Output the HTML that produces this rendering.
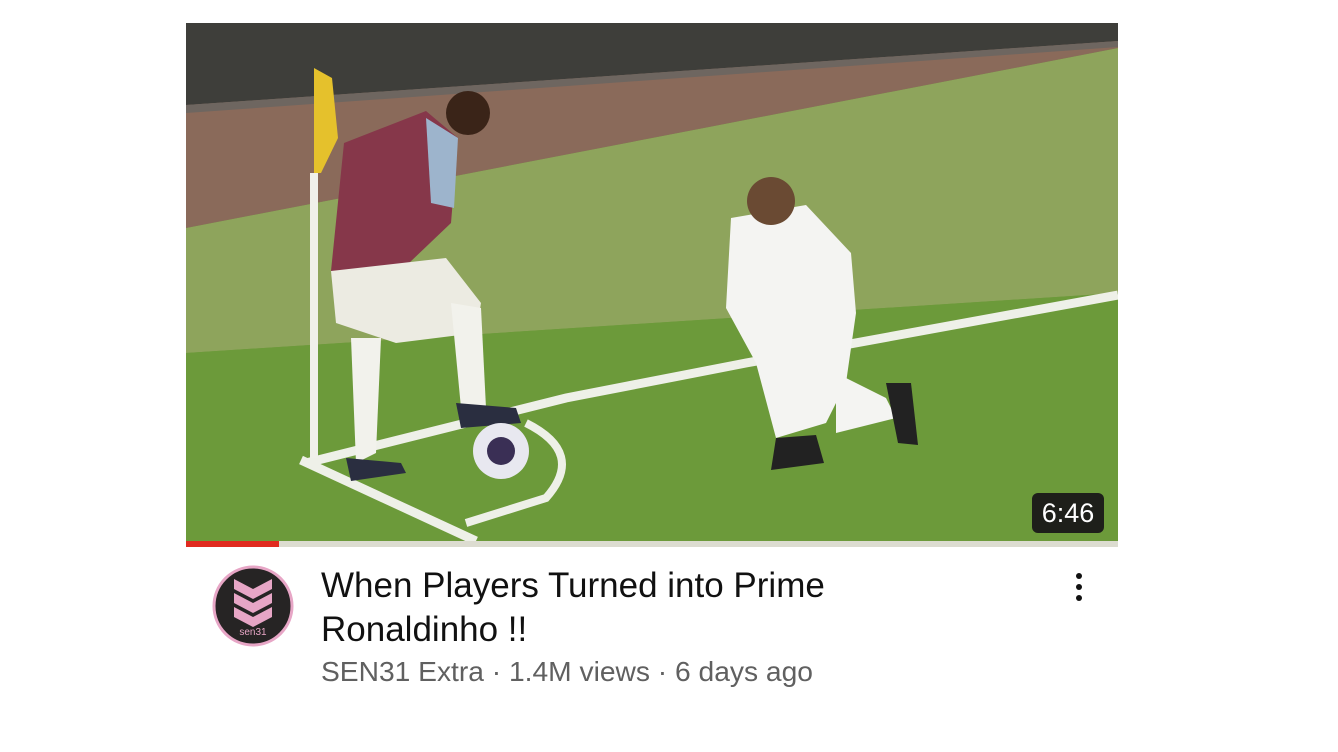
<!DOCTYPE html>
<html><head><meta charset="utf-8"><style>
body{margin:0;width:1338px;height:752px;background:#fff;overflow:hidden;font-family:"Liberation Sans",sans-serif;position:relative}
.thumb{position:absolute;left:186px;top:23px;width:932px;height:518px;overflow:hidden}
.bar{position:absolute;left:186px;top:541px;width:932px;height:6px;background:#dcdcd0}
.bar i{position:absolute;left:0;top:0;width:93px;height:6px;background:#e02a1f}
.dur{position:absolute;left:1032px;top:493px;width:72px;height:40px;background:#1e1f1a;border-radius:6px;color:#fff;font-size:27px;line-height:40px;text-align:center}
.t{position:absolute;left:321px;color:#111;font-size:35px;white-space:nowrap}
.m{position:absolute;left:321px;top:655px;color:#606060;font-size:28.2px;white-space:nowrap}
.dots{position:absolute;left:1076px;top:573px}
.dots i{display:block;width:6px;height:6px;border-radius:50%;background:#111;margin-bottom:5px}
</style></head><body>
<div class="thumb">
<svg width="932" height="518" viewBox="0 0 932 518">
<rect width="932" height="518" fill="#6f9a3e"/>
<polygon points="0,205 932,25 932,270 0,330" fill="#8ea45c"/>
<polygon points="0,330 932,270 932,518 0,518" fill="#6c9a3a"/>
<polygon points="0,0 932,0 932,25 0,205" fill="#8a6a5a"/>
<polygon points="0,0 932,0 932,18 0,82" fill="#3e3e3a"/>
<polygon points="0,82 932,18 932,24 0,90" fill="#6e6660"/>
<polyline points="120,440 380,375 560,340 932,272" stroke="#eef0e8" stroke-width="9" fill="none"/>
<polyline points="115,437 290,518" stroke="#eef0e8" stroke-width="9" fill="none"/>
<path d="M340,400 Q400,430 360,475 L280,500" stroke="#eef0e8" stroke-width="8" fill="none"/>
<rect x="124" y="150" width="8" height="285" fill="#f0f0ea"/>
<polygon points="128,45 146,55 152,115 135,150 128,150" fill="#e5c12c"/>
<polygon points="158,120 240,88 272,115 265,200 200,262 145,248" fill="#86374a"/>
<polygon points="240,95 272,115 268,185 245,180" fill="#9db4cc"/>
<circle cx="282" cy="90" r="22" fill="#3a2418"/>
<polygon points="145,248 260,235 295,280 290,310 210,320 150,300" fill="#ecebe2"/>
<polygon points="165,315 195,315 190,430 170,440" fill="#f2f2ec"/>
<polygon points="265,280 295,285 300,385 275,385" fill="#f2f2ec"/>
<polygon points="160,435 215,440 220,450 165,458" fill="#2a2e40"/>
<polygon points="270,380 330,385 335,400 275,405" fill="#2a2e40"/>
<circle cx="315" cy="428" r="28" fill="#e8e8f0"/>
<circle cx="315" cy="428" r="14" fill="#3a2f55"/>
<polygon points="545,195 620,182 665,230 670,290 660,360 640,400 590,415 570,340 540,285" fill="#f4f4f2"/>
<circle cx="585" cy="178" r="24" fill="#6a4a33"/>
<polygon points="650,350 700,375 710,395 650,410" fill="#f4f4f2"/>
<polygon points="700,360 725,360 732,422 712,420" fill="#222"/>
<polygon points="590,415 630,412 638,440 585,447" fill="#222"/>
</svg>
</div>
<div class="bar"><i></i></div>
<div class="dur">6:46</div>
<svg style="position:absolute;left:212px;top:565px" width="82" height="82" viewBox="0 0 82 82">
<circle cx="41" cy="41" r="39" fill="#262424" stroke="#e7a6c6" stroke-width="3"/>
<polygon points="22,14 41,24 60,14 60,24 41,34 22,24" fill="#e7a6c6"/>
<polygon points="22,28 41,38 60,28 60,38 41,48 22,38" fill="#e7a6c6"/>
<polygon points="22,42 41,52 60,42 60,52 41,62 22,52" fill="#e7a6c6"/>
<text x="41" y="70" font-size="10" fill="#e7a6c6" text-anchor="middle" font-family="Liberation Sans">sen31</text>
</svg>
<div class="t" style="top:566px">When Players Turned into Prime</div>
<div class="t" style="top:610px">Ronaldinho !!</div>
<div class="m">SEN31 Extra · 1.4M views · 6 days ago</div>
<div class="dots"><i></i><i></i><i></i></div>
</body></html>
